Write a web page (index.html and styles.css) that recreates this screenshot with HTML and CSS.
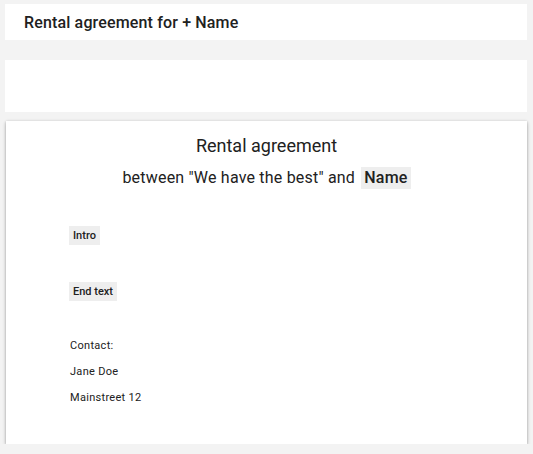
FILE: index.html
```html
<!DOCTYPE html>
<html>
<head>
<meta charset="utf-8">
<link rel="stylesheet" href="styles.css">
</head>
<body>
<div class="page">
  <header class="topbar">
    <h1 class="title">Rental agreement for + Name</h1>
  </header>
  <div class="blank"></div>
  <main class="card">
    <h2 class="doc-title">Rental agreement</h2>
    <p class="doc-sub">between "We have the best" and <span class="chip chip-lg">Name</span></p>
    <div class="section"><span class="chip">Intro</span></div>
    <div class="section"><span class="chip">End text</span></div>
    <div class="contact">
      <p class="line">Contact:</p>
      <p class="line">Jane Doe</p>
      <p class="line">Mainstreet 12</p>
    </div>
  </main>
</div>
</body>
</html>
```

FILE: styles.css
```css
html, body {
  margin: 0;
  padding: 0;
}
body {
  background: #f3f3f3;
  font-family: Roboto, "Liberation Sans", sans-serif;
  color: #212121;
}
.page {
  padding: 4px 6px 0 5px;
  display: flex;
  flex-direction: column;
}
.topbar {
  background: #fff;
  height: 36px;
  display: flex;
  align-items: center;
  padding-left: 19px;
}
.title {
  margin: 0;
  font-size: 16px;
  font-weight: 500;
  letter-spacing: 0.15px;
}
.blank {
  background: #fff;
  height: 52px;
  margin-top: 20px;
}
.card {
  background: #fff;
  margin: 9px 0 0 1px;
  height: 323px;
  box-sizing: border-box;
  box-shadow: 0 2px 4px rgba(0,0,0,0.2), 0 1px 2px rgba(0,0,0,0.14), 0 0 3px rgba(0,0,0,0.1);
  padding: 13px 0 0 63px;
}
.doc-title {
  margin: 0;
  text-align: center;
  font-size: 18px;
  font-weight: 400;
  line-height: 24px;
  padding-right: 63px;
}
.doc-sub {
  margin: 8px 0 0;
  text-align: center;
  font-size: 16px;
  line-height: 24px;
  letter-spacing: 0.2px;
  padding-right: 63px;
}
.chip {
  display: inline-block;
  background: #eeeeee;
  font-size: 11px;
  font-weight: 500;
  line-height: 19px;
  padding: 0 4px;
}
.chip-lg {
  font-size: 16px;
  line-height: 22px;
  padding: 0 3px;
  margin-left: 2px;
}
.section {
  margin-top: 36px;
  height: 19px;
  display: flex;
}
.section + .section {
  margin-top: 37px;
}
.contact {
  margin-top: 38px;
  display: flex;
  flex-direction: column;
  gap: 12px;
}
.line {
  margin: 0;
  font-size: 11px;
  line-height: 14px;
  letter-spacing: 0.3px;
  padding-left: 1px;
}
```
